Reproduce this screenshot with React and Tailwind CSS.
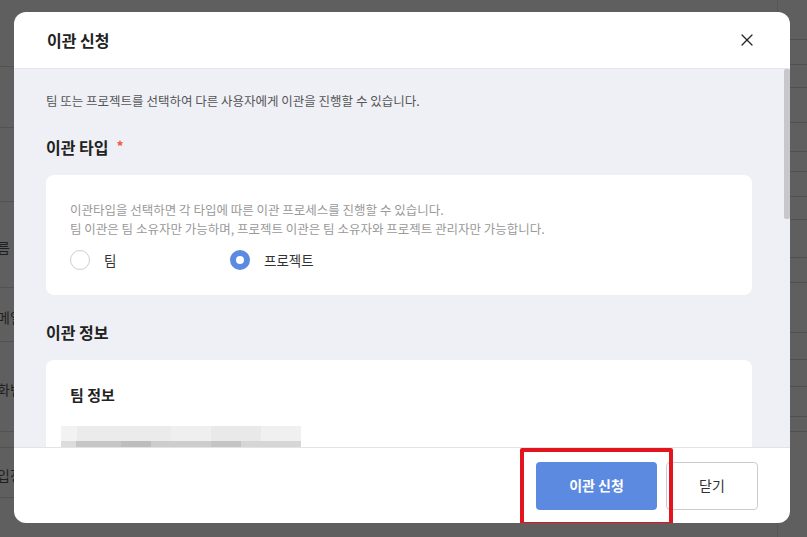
import { X } from 'lucide-react';

const font = { fontFamily: '"Noto Sans CJK KR", "Noto Sans", sans-serif' };

function BackgroundPage() {
  const leftRows = [
    { h: 'h-[67px]', t: '' },
    { h: 'h-[61px]', t: '' },
    { h: 'h-[74px]', t: '' },
    { h: 'h-[86px]', t: '름' },
    { h: 'h-[54px]', t: '메일' },
    { h: 'h-[90px]', t: '화번' },
    { h: 'h-[16px]', t: '' },
    { h: 'h-[50px]', t: '입정' },
  ];
  const rightRows = ['h-[40px]', 'h-[25px]', 'h-[23px]', 'h-[35px]', 'h-[29px]', 'h-[20px]', 'h-[25px]', 'h-[23px]', 'h-[38px]', 'h-[25px]', 'h-[50px]', 'h-[27px]', 'h-[27px]', 'h-[30px]', 'h-[15px]'];
  return (
    <div className="flex h-full w-full bg-[#5f5f5f]">
      <div className="flex w-[40px] flex-col">
        {leftRows.map((r, i) => (
          <div key={i} className={`${r.h} -ml-[3px] flex items-center border-b border-[#525252] pt-[6px] text-[14px] text-[#1f1f1f]`}>
            {r.t}
          </div>
        ))}
      </div>
      <div className="flex-1" />
      <div className="flex w-[30px] flex-col border-l border-[#585858]">
        {rightRows.map((h, i) => (
          <div key={i} className={`${h} border-b border-[#505050]`} />
        ))}
      </div>
    </div>
  );
}

function Radio({ checked, label }) {
  return (
    <label className="flex items-center gap-[14px]">
      {checked ? (
        <span className="box-border h-[20px] w-[20px] rounded-full border-[6px] border-[#5b8ae0] bg-white" />
      ) : (
        <span className="box-border h-[20px] w-[20px] rounded-full border border-[#cfcfcf] bg-white" />
      )}
      <span className="text-[13.5px] text-[#333]">{label}</span>
    </label>
  );
}

export default function App() {
  return (
    <div className="relative h-[537px] w-[807px] overflow-hidden" style={font}>
      <BackgroundPage />

      <div className="absolute left-[14px] top-[12px] flex h-[511px] w-[776px] flex-col overflow-hidden rounded-[12px] bg-white">
        <div className="flex h-[57px] shrink-0 items-center justify-between border-b border-[#e6e6ea] pl-[33px] pr-[33px]">
          <h2 className="text-[16px] font-semibold text-[#222]">이관 신청</h2>
          <X size={20} strokeWidth={1.5} className="text-[#222]" />
        </div>

        <div className="flex h-[378px] shrink-0 overflow-hidden bg-[#eff0f5]">
          <div className="flex flex-1 flex-col pl-[32px] pr-[32px] pt-[23px]">
            <p className="text-[12.5px] text-[#555]">팀 또는 프로젝트를 선택하여 다른 사용자에게 이관을 진행할 수 있습니다.</p>

            <div className="mt-[24px] flex items-center text-[16px] font-bold text-[#222]">
              이관 타입
              <span className="ml-[8px] text-[14px] text-[#ef5a3c]">*</span>
            </div>

            <div className="mt-[16px] flex flex-col rounded-[8px] bg-white px-[24px] pb-[25px] pt-[25px]">
              <p className="text-[12.5px] leading-[19px] text-[#999]">
                이관타입을 선택하면 각 타입에 따른 이관 프로세스를 진행할 수 있습니다.
                <br />
                팀 이관은 팀 소유자만 가능하며, 프로젝트 이관은 팀 소유자와 프로젝트 관리자만 가능합니다.
              </p>
              <div className="mt-[12px] flex">
                <div className="w-[160px]">
                  <Radio label="팀" />
                </div>
                <Radio checked label="프로젝트" />
              </div>
            </div>

            <div className="mt-[25px] text-[16px] font-bold text-[#222]">이관 정보</div>

            <div className="mt-[16px] flex flex-col rounded-[8px] bg-white px-[24px] pt-[24px] pb-[24px]">
              <div className="text-[15px] font-semibold text-[#222]">팀 정보</div>
              <div className="-ml-[9px] mt-[19px] flex w-[240px] flex-col">
                <div className="flex h-[15px]">
                  <div className="w-[16px] bg-[#f2f2f2]" />
                  <div className="flex-1 bg-[#ebebeb]" />
                  <div className="w-[40px] bg-[#efefef]" />
                  <div className="w-[50px] bg-[#e9e9e9]" />
                  <div className="w-[40px] bg-[#f0f0f0]" />
                </div>
                <div className="flex h-[7px]">
                  <div className="w-[15px] bg-[#dcdcdc]" />
                  <div className="w-[45px] bg-[#c6c6c6]" />
                  <div className="w-[30px] bg-[#bdbdbd]" />
                  <div className="w-[60px] bg-[#cdcdcd]" />
                  <div className="w-[30px] bg-[#c4c4c4]" />
                  <div className="flex-1 bg-[#d6d6d6]" />
                </div>
              </div>
            </div>
          </div>
          <div className="flex w-[6px] flex-col">
            <div className="h-[150px] rounded-[2px] bg-[#c8c8cc]" />
          </div>
        </div>

        <div className="flex flex-1 items-center justify-end gap-[9px] border-t border-[#e3e3e6] pr-[32px]">
          <div className="relative">
            <button className="h-[48px] w-[121px] rounded-[4px] bg-[#5b8ae0] text-[14px] font-bold text-white">이관 신청</button>
            <div className="pointer-events-none absolute -bottom-[16px] -left-[16px] -right-[16px] -top-[14px] rounded-[2px] border-[4px] border-[#e3141e]" />
          </div>
          <button className="h-[48px] w-[92px] rounded-[4px] border border-[#cccccc] bg-white text-[14px] text-[#333]">닫기</button>
        </div>
      </div>
    </div>
  );
}
